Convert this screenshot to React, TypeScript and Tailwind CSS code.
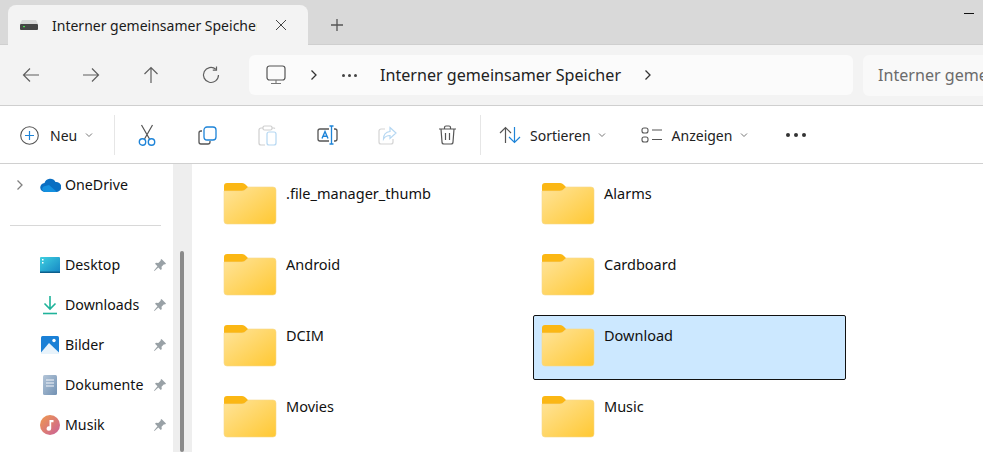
import type { ReactNode } from "react";

const GREY = "#5f5f5f";
const BLUE = "#1e84d8";

const folders = [
  { name: ".file_manager_thumb" },
  { name: "Alarms" },
  { name: "Android" },
  { name: "Cardboard" },
  { name: "DCIM" },
  { name: "Download", selected: true },
  { name: "Movies" },
  { name: "Music" },
];

const Chevron = ({ className = "" }: { className?: string }) => (
  <svg width="10" height="10" viewBox="0 0 10 10" fill="none" className={className}>
    <path d="M2 3.5 5 6.5 8 3.5" stroke="#777" strokeWidth="1" />
  </svg>
);

const ChevronRight = ({ color = "#333" }: { color?: string }) => (
  <svg width="10" height="12" viewBox="0 0 10 12" fill="none">
    <path d="M2.5 1.5 7 6 2.5 10.5" stroke={color} strokeWidth="1.3" />
  </svg>
);

const Folder = () => (
  <svg width="54" height="44" viewBox="0 0 54 44" className="shrink-0">
    <defs>
      <linearGradient id="folderFront" x1="0" y1="0" x2="1" y2="1">
        <stop offset="0" stopColor="#ffe49a" />
        <stop offset="1" stopColor="#ffc832" />
      </linearGradient>
    </defs>
    <path d="M1 5a3 3 0 0 1 3-3h15c2 0 3 1 4.500 2.500L27 8v6H1Z" fill="#fbb714" />
    <path d="M1 10h18c2 0 3-1 4.500-2.500L25.500 6H50a3 3 0 0 1 3 3v31a3 3 0 0 1-3 3H4a3 3 0 0 1-3-3Z" fill="url(#folderFront)" stroke="#f7d98c" strokeWidth="0.6" />
  </svg>
);

const NavButton = ({ children }: { children: ReactNode }) => (
  <div className="w-[60px] h-[60px] flex items-center justify-center shrink-0">{children}</div>
);

const ToolButton = ({ children }: { children: ReactNode }) => (
  <div className="w-[60px] h-full flex items-center justify-center shrink-0">{children}</div>
);

const Divider = () => <div className="w-px h-[40px] bg-[#e6e6e6] shrink-0" />;

const Pin = () => (
  <svg width="14" height="14" viewBox="0 0 14 14" className="ml-auto mr-[6px] shrink-0">
    <path d="M8.500 1 13 5.500l-1 1-1-.3-2.500 2.500.3 2.300-1 1-2.500-2.500L1.500 13 1 12.500l3.500-4.300L2 5.700l1-1 2.300.3L7.800 2.500 7.500 2Z" fill="#99a1a6" />
  </svg>
);

const sidebarItems: { name: string; icon: ReactNode }[] = [
  {
    name: "Desktop",
    icon: (
      <svg width="20" height="16" viewBox="0 0 20 16">
        <defs>
          <linearGradient id="desk" x1="0" y1="0" x2="1" y2="1">
            <stop offset="0" stopColor="#3fd0e0" />
            <stop offset="1" stopColor="#1585c4" />
          </linearGradient>
        </defs>
        <rect width="20" height="16" rx="1" fill="url(#desk)" />
        <rect y="14.500" width="20" height="1.500" fill="#0c5f8c" />
        <rect x="2" y="2" width="1.500" height="1.500" fill="#fff" />
        <rect x="2" y="5" width="1.500" height="1.500" fill="#fff" />
      </svg>
    ),
  },
  {
    name: "Downloads",
    icon: (
      <svg width="16" height="20" viewBox="0 0 16 20" fill="none">
        <path d="M8 1v13M2.500 8.500 8 14l5.500-5.500" stroke="#1fb39a" strokeWidth="1.600" />
        <path d="M1 18.500h14" stroke="#1fb39a" strokeWidth="1.600" />
      </svg>
    ),
  },
  {
    name: "Bilder",
    icon: (
      <svg width="18" height="18" viewBox="0 0 18 18">
        <rect width="18" height="18" rx="1.500" fill="#1a80d6" />
        <circle cx="13" cy="4.500" r="1.700" fill="#fff" />
        <path d="M0 16.500 8 7l10 9.500V18H0Z" fill="#e8f3fb" />
      </svg>
    ),
  },
  {
    name: "Dokumente",
    icon: (
      <svg width="14" height="20" viewBox="0 0 14 20">
        <defs>
          <linearGradient id="doc" x1="0" y1="0" x2="1" y2="1">
            <stop offset="0" stopColor="#b4c5d8" />
            <stop offset="1" stopColor="#7191b3" />
          </linearGradient>
        </defs>
        <rect width="14" height="20" rx="1.500" fill="url(#doc)" />
        <path d="M3 5h8M3 8h8M3 11h8" stroke="#f3f6fa" strokeWidth="1.100" />
      </svg>
    ),
  },
  {
    name: "Musik",
    icon: (
      <svg width="20" height="20" viewBox="0 0 20 20">
        <defs>
          <linearGradient id="music" x1="0" y1="0" x2="1" y2="1">
            <stop offset="0" stopColor="#f09a4c" />
            <stop offset="1" stopColor="#c9609a" />
          </linearGradient>
        </defs>
        <circle cx="10" cy="10" r="10" fill="url(#music)" />
        <path d="M9.500 5h4v2.300h-2.300v6.200a2.300 2.300 0 1 1-1.700-2.200Z" fill="#fff" />
      </svg>
    ),
  },
];

const Sidebar = () => (
  <div className="w-[192px] shrink-0 flex h-full">
    <div className="w-[173px] shrink-0 pt-[1px]">
      <div className="h-[40px] flex items-center text-[14.200px] text-[#111]">
        <div className="w-[40px] pl-[15px]">
          <ChevronRight color="#808080" />
        </div>
        <svg width="21" height="14" viewBox="0 0 21 14" className="mr-[4px]">
          <path d="M5 14a4.500 4.500 0 0 1-.5-9A6 6 0 0 1 15.500 4 4.500 4.500 0 0 1 17 14Z" fill="#0a6fc2" />
          <path d="M5 14a3 3 0 0 1-1.500-5.500L9 7l8 7Z" fill="#1490df" />
        </svg>
        OneDrive
      </div>
      <div className="mt-[20px] mb-[19px] ml-[10px] w-[151px] h-px bg-[#d8d8d8]" />
      {sidebarItems.map((item) => (
        <div key={item.name} className="h-[40px] flex items-center text-[14.200px] text-[#111]">
          <div className="w-[40px] shrink-0" />
          <div className="w-[20px] shrink-0 flex justify-center">{item.icon}</div>
          <span className="ml-[5px]">{item.name}</span>
          <Pin />
        </div>
      ))}
    </div>
    <div className="w-[19px] shrink-0 h-full bg-[#eeeeee] pt-[87px] pl-[7px]">
      <div className="w-[4px] h-full rounded-full bg-[#8a8a8a]" />
    </div>
  </div>
);

export default function App() {
  return (
    <div className="w-[983px] h-[452px] overflow-hidden bg-white flex flex-col font-['Noto_Sans','Open_Sans',sans-serif]">
      {/* Title bar */}
      <div className="h-[45px] shrink-0 bg-[#d9d9d9] border-b border-[#cfcfcf] flex items-end pl-[8px]">
        <div className="w-[300px] h-[40px] -mb-px bg-[#f3f3f3] rounded-t-[8px] flex items-center shrink-0">
          <svg width="18" height="10" viewBox="0 0 18 10" className="ml-[12px]">
            <path d="M2 0h14l2 4H0Z" fill="#d8d8d8" />
            <rect y="4" width="18" height="6" rx="1" fill="#454545" />
            <rect x="3" y="6" width="2" height="1.200" fill="#4ade50" />
          </svg>
          <div className="ml-[14px] w-[205px] overflow-hidden whitespace-nowrap text-[14px] text-[#1a1a1a]">
            Interner gemeinsamer Speicher
          </div>
          <svg width="12" height="12" viewBox="0 0 12 12" className="ml-[18px]" fill="none">
            <path d="M1 1l10 10M11 1 1 11" stroke="#444" strokeWidth="1" />
          </svg>
        </div>
        <svg width="14" height="14" viewBox="0 0 14 14" className="ml-[22px] mb-[12px]" fill="none">
          <path d="M7 1v12M1 7h12" stroke="#555" strokeWidth="1.300" />
        </svg>
        <div className="ml-auto mr-[9px] self-start mt-[13px] w-[10px] h-px bg-[#111]" />
      </div>

      {/* Address row */}
      <div className="h-[61px] shrink-0 bg-[#f3f3f3] border-b border-[#cfcfcf] flex items-center pl-[1px]">
        <NavButton>
          <svg width="18" height="16" viewBox="0 0 18 16" fill="none">
            <path d="M17 8H1.500M8 1.500 1.500 8 8 14.500" stroke={GREY} strokeWidth="1.200" />
          </svg>
        </NavButton>
        <NavButton>
          <svg width="18" height="16" viewBox="0 0 18 16" fill="none">
            <path d="M1 8h15.500M10 1.500 16.500 8 10 14.500" stroke={GREY} strokeWidth="1.200" />
          </svg>
        </NavButton>
        <NavButton>
          <svg width="16" height="18" viewBox="0 0 16 18" fill="none">
            <path d="M8 17V1.500M1.500 8 8 1.500 14.500 8" stroke={GREY} strokeWidth="1.200" />
          </svg>
        </NavButton>
        <NavButton>
          <svg width="18" height="18" viewBox="0 0 18 18" fill="none">
            <path d="M13.800 3.200A7.500 7.500 0 1 0 16.500 9" stroke={GREY} strokeWidth="1.200" />
            <path d="M14.500 0.500v3.700h-3.700" stroke={GREY} strokeWidth="1.200" />
          </svg>
        </NavButton>
        <div className="ml-[8px] w-[604px] h-[40px] bg-[#fbfbfb] rounded-[6px] flex items-center shrink-0">
          <svg width="20" height="20" viewBox="0 0 20 20" fill="none" className="ml-[17px]">
            <rect x="1" y="1" width="18" height="14" rx="2.500" stroke="#555" strokeWidth="1.200" />
            <path d="M10 15v3M5 18.500h10" stroke="#777" strokeWidth="1.100" />
          </svg>
          <div className="ml-[23px]">
            <ChevronRight />
          </div>
          <div className="ml-[23px] flex gap-[3px]">
            <span className="w-[3px] h-[3px] rounded-full bg-[#444]" />
            <span className="w-[3px] h-[3px] rounded-full bg-[#444]" />
            <span className="w-[3px] h-[3px] rounded-full bg-[#444]" />
          </div>
          <span className="ml-[23px] pt-[1px] text-[16.100px] text-[#222] whitespace-nowrap">Interner gemeinsamer Speicher</span>
          <div className="ml-[22px]">
            <ChevronRight />
          </div>
        </div>
        <div className="ml-[10px] flex-1 h-[41px] bg-[#f9f9f9] rounded-l-[6px] pl-[15px] pt-[1px] flex items-center overflow-hidden">
          <span className="text-[16.100px] text-[#6b6b6b] whitespace-nowrap">Interner gemeinsamer Speicher</span>
        </div>
      </div>

      {/* Toolbar */}
      <div className="h-[58px] shrink-0 border-b border-[#d0d0d0] flex items-center text-[14px] text-[#222] pt-[1px]">
        <div className="w-[114px] h-full flex items-center pl-[20px] shrink-0">
          <svg width="19" height="19" viewBox="0 0 19 19" fill="none">
            <circle cx="9.500" cy="9.500" r="8.800" stroke="#555" strokeWidth="1.100" />
            <path d="M9.500 5v9M5 9.500h9" stroke={BLUE} strokeWidth="1.200" />
          </svg>
          <span className="ml-[11px]">Neu</span>
          <Chevron className="ml-[7px]" />
        </div>
        <Divider />
        <div className="w-[2px] shrink-0" />
        <ToolButton>
          <svg width="18" height="22" viewBox="0 0 18 22" fill="none">
            <path d="M3.500 1 11.500 15M14.500 1 6.500 15" stroke="#555" strokeWidth="1.200" />
            <circle cx="4.500" cy="18" r="3.200" stroke={BLUE} strokeWidth="1.400" />
            <circle cx="13.500" cy="18" r="3.200" stroke={BLUE} strokeWidth="1.400" />
          </svg>
        </ToolButton>
        <ToolButton>
          <svg width="19" height="19" viewBox="0 0 19 19" fill="none">
            <path d="M4 5H3a2 2 0 0 0-2 2v9a2 2 0 0 0 2 2h7a2 2 0 0 0 2-2v-1" stroke="#555" strokeWidth="1.300" />
            <rect x="6" y="1" width="12" height="13" rx="3" stroke={BLUE} strokeWidth="1.300" />
          </svg>
        </ToolButton>
        <ToolButton>
          <svg width="19" height="21" viewBox="0 0 19 21" fill="none">
            <path d="M5 3H3a2 2 0 0 0-2 2v13a2 2 0 0 0 2 2h4M14 3h2a2 2 0 0 1 1 .5" stroke="#cfcfcf" strokeWidth="1.200" />
            <rect x="5" y="1" width="9" height="4" rx="1.500" stroke="#cfcfcf" strokeWidth="1.200" />
            <rect x="9" y="7" width="9" height="13" rx="2" stroke="#b5d7f2" strokeWidth="1.200" />
          </svg>
        </ToolButton>
        <ToolButton>
          <svg width="21" height="20" viewBox="0 0 21 20" fill="none">
            <path d="M12 4H3a2 2 0 0 0-2 2v8a2 2 0 0 0 2 2h9M17 4h1a2 2 0 0 1 2 2v8a2 2 0 0 1-2 2h-1" stroke="#555" strokeWidth="1.300" />
            <path d="M5 13.500 8 6.500l3 7M6 11.200h4" stroke={BLUE} strokeWidth="1.400" />
            <path d="M14.500 1v18M12.500 1h4M12.500 19h4" stroke={BLUE} strokeWidth="1.300" />
          </svg>
        </ToolButton>
        <ToolButton>
          <svg width="19" height="19" viewBox="0 0 19 19" fill="none">
            <path d="M7 3H3a2 2 0 0 0-2 2v11a2 2 0 0 0 2 2h10a2 2 0 0 0 2-2v-3" stroke="#d4d4d4" strokeWidth="1.200" />
            <path d="M12 1.500 18 7l-6 5.500V9.500c-3 0-5 1-6.500 3.500 0-4 2.500-7 6.500-7.500Z" stroke="#b5d7f2" strokeWidth="1.200" />
          </svg>
        </ToolButton>
        <ToolButton>
          <svg width="19" height="20" viewBox="0 0 19 20" fill="none">
            <path d="M1 4h17M6.500 4V2.500A1.500 1.500 0 0 1 8 1h3a1.500 1.500 0 0 1 1.500 1.500V4M3 4l1 13a2 2 0 0 0 2 2h7a2 2 0 0 0 2-2l1-13M7.500 8v7M11.500 8v7" stroke="#555" strokeWidth="1.200" />
          </svg>
        </ToolButton>
        <div className="w-[3px] shrink-0" />
        <Divider />
        <svg width="22" height="18" viewBox="0 0 22 18" fill="none" className="ml-[18px]">
          <path d="M6.500 17V1.500M1 7l5.500-5.500L12 7" stroke="#555" strokeWidth="1.200" />
          <path d="M15.500 1v15.500M10 11l5.500 5.500L21 11" stroke={BLUE} strokeWidth="1.200" />
        </svg>
        <span className="ml-[9px]">Sortieren</span>
        <Chevron className="ml-[6px]" />
        <svg width="22" height="16" viewBox="0 0 22 16" fill="none" className="ml-[34px]">
          <rect x="1" y="1" width="6" height="5" rx="2" stroke="#555" strokeWidth="1.100" />
          <rect x="1" y="10" width="6" height="5" rx="2" stroke="#555" strokeWidth="1.100" />
          <path d="M11 3h10M11 12.500h10" stroke="#555" strokeWidth="1.100" />
        </svg>
        <span className="ml-[9px]">Anzeigen</span>
        <Chevron className="ml-[7px]" />
        <div className="ml-[37px] flex gap-[4px]">
          <span className="w-[4px] h-[4px] rounded-full bg-[#333]" />
          <span className="w-[4px] h-[4px] rounded-full bg-[#333]" />
          <span className="w-[4px] h-[4px] rounded-full bg-[#333]" />
        </div>
      </div>

      {/* Body */}
      <div className="flex-1 min-h-0 flex">
        <Sidebar />
        <div className="flex-1 min-w-0 pl-[23px] pt-[9px]">
          <div className="grid grid-cols-[313px_313px] gap-x-[5px] gap-y-[6px]">
            {folders.map((folder) => (
              <div
                key={folder.name}
                className={`h-[65px] flex items-start pl-[7px] pt-[7px] rounded-[2px] border ${
                  folder.selected ? "bg-[#cce8ff] border-[#111]" : "border-transparent"
                }`}
              >
                <Folder />
                <span className="ml-[9px] mt-[2px] text-[14.500px] text-[#111]">{folder.name}</span>
              </div>
            ))}
          </div>
        </div>
      </div>
    </div>
  );
}
